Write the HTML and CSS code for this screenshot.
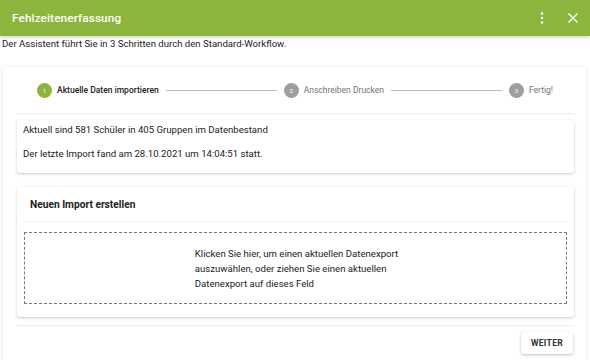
FILE: index.html
```html
<!DOCTYPE html>
<html lang="de">
<head>
<meta charset="utf-8">
<link rel="stylesheet" href="styles.css">
</head>
<body>
<header class="topbar">
  <div class="title">Fehlzeitenerfassung</div>
  <div class="actions">
    <svg class="icon" width="14" height="14" viewBox="0 0 14 14"><circle cx="7" cy="2.5" r="1.3" fill="#fff"/><circle cx="7" cy="7" r="1.3" fill="#fff"/><circle cx="7" cy="11.5" r="1.3" fill="#fff"/></svg>
    <svg class="icon" width="14" height="14" viewBox="0 0 14 14"><path d="M2.5 2.5 L11.5 11.5 M11.5 2.5 L2.5 11.5" stroke="#fff" stroke-width="1.4" fill="none"/></svg>
  </div>
</header>
<p class="intro">Der Assistent führt Sie in 3 Schritten durch den Standard-Workflow.</p>
<main class="wizard">
  <div class="stepper">
    <div class="step active"><span class="num">1</span><span class="label">Aktuelle Daten importieren</span></div>
    <div class="line"></div>
    <div class="step"><span class="num">2</span><span class="label">Anschreiben Drucken</span></div>
    <div class="line"></div>
    <div class="step"><span class="num">3</span><span class="label">Fertig!</span></div>
  </div>
  <div class="content">
    <section class="card info">
      <p>Aktuell sind 581 Schüler in 405 Gruppen im Datenbestand</p>
      <p>Der letzte Import fand am 28.10.2021 um 14:04:51 statt.</p>
    </section>
    <section class="card import">
      <h2 class="card-title">Neuen Import erstellen</h2>
      <div class="dropzone">
        <div class="drop-text">Klicken Sie hier, um einen aktuellen Datenexport<br>auszuwählen, oder ziehen Sie einen aktuellen<br>Datenexport auf dieses Feld</div>
      </div>
    </section>
  </div>
  <div class="footer">
    <button class="btn">WEITER</button>
  </div>
</main>
</body>
</html>
```
FILE: styles.css
```css
* { box-sizing: border-box; }
html, body { margin: 0; padding: 0; background: #fff; }
body {
  font-family: Roboto, "Noto Sans", sans-serif;
  color: #222;
  width: 590px;
  height: 360px;
  overflow: hidden;
}
.topbar {
  height: 36px;
  background: #8bb53c;
  display: flex;
  align-items: center;
  justify-content: space-between;
  padding: 0 10px 0 12px;
  box-shadow: 0 2px 3px rgba(0,0,0,0.15);
  position: relative;
}
.title {
  color: #fff;
  font-size: 11.8px;
  font-weight: 500;
  letter-spacing: 0.1px;
}
.actions { display: flex; gap: 17px; align-items: center; }
.icon { display: block; }
.intro {
  margin: 1px 0 0 2px;
  font-size: 9.6px;
  line-height: 14px;
  color: #222;
}
.wizard {
  margin: 16px 4px 0 3px;
  height: 300px;
  box-shadow: 0 1px 4px rgba(0,0,0,0.14);
  border-radius: 3px;
  padding: 0 12px 0 13px;
  background: #fff;
}
.stepper {
  height: 47px;
  display: flex;
  align-items: center;
  padding: 0 21px 0 21px;
  border-bottom: 1px solid #eeeeee;
}
.step { display: flex; align-items: center; gap: 5px; flex: none; }
.num {
  width: 15px; height: 15px; border-radius: 50%;
  background: #9e9e9e; color: #fff;
  font-size: 6px;
  display: flex; align-items: center; justify-content: center;
}
.step.active .num { background: #8bb53c; }
.label { font-size: 8.5px; color: #757575; }
.step.active .label { color: #222; font-weight: 500; }
.line { flex: 1; height: 1px; background: #bdbdbd; margin: 0 7px; }
.content { padding: 6px 0 8px 1px; border-bottom: 1px solid #eeeeee; }
.card {
  background: #fff;
  border-radius: 3px;
  box-shadow: 0 1px 3px rgba(0,0,0,0.22);
}
.info { padding: 3px 6px 2px; }
.info p {
  margin: 0 0 10px;
  font-size: 9.6px;
  line-height: 14px;
}
.import { margin-top: 14px; padding: 0 7px 13px; }
.card-title {
  margin: 0 -1px;
  height: 35px;
  display: flex;
  align-items: center;
  padding-left: 7px;
  font-size: 10.2px;
  font-weight: 700;
  border-bottom: 1px solid #f0f0f0;
}
.dropzone {
  margin-top: 10px;
  height: 72px;
  border: 1px dashed #777;
  display: flex;
  justify-content: center;
  align-items: center;
}
.drop-text {
  font-size: 9.6px;
  line-height: 15px;
  color: #222;
  padding-left: 2px;
}
.footer {
  display: flex;
  justify-content: flex-end;
  padding: 6px 1px 0 0;
}
.btn {
  width: 52px; height: 22px;
  border: none;
  background: #fff;
  border-radius: 3px;
  box-shadow: 0 1px 3px rgba(0,0,0,0.25);
  font-family: Roboto, sans-serif;
  font-size: 8.6px;
  font-weight: 700;
  color: #333;
  letter-spacing: 0.3px;
  padding: 0;
}
```
